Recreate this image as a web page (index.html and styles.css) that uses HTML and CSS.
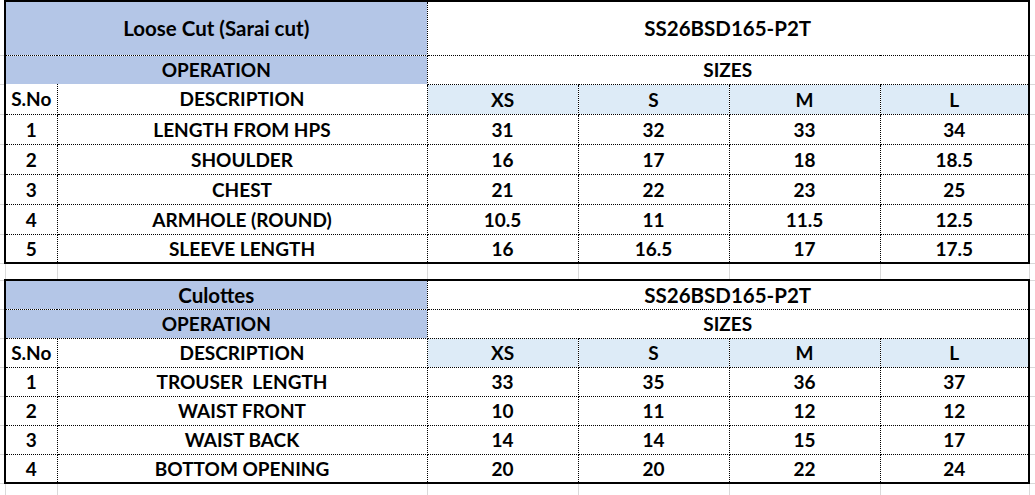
FILE: index.html
```html
<!DOCTYPE html>
<html>
<head>
<meta charset="utf-8">
<link rel="stylesheet" href="styles.css">
</head>
<body>
<table class="sheet">
  <colgroup>
    <col class="col-gut">
    <col class="col-a">
    <col class="col-b">
    <col class="col-s">
    <col class="col-s">
    <col class="col-s">
    <col class="col-f">
    <col class="col-gut-r">
  </colgroup>
  <tbody>
    <!-- Table 1 -->
    <tr class="h-title">
      <td class="gut"></td>
      <td colspan="2" class="c blue t-top t-left title">Loose Cut (Sarai cut)</td>
      <td colspan="4" class="c t-top t-right title">SS26BSD165-P2T</td>
      <td class="gut-r"></td>
    </tr>
    <tr class="h-29">
      <td class="gut"></td>
      <td colspan="2" class="c blue t-left no-bot">OPERATION</td>
      <td colspan="4" class="c t-right">SIZES</td>
      <td class="gut-r"></td>
    </tr>
    <tr class="h-30">
      <td class="gut"></td>
      <td class="c t-left no-top">S.No</td>
      <td class="c no-top">DESCRIPTION</td>
      <td class="c pale">XS</td>
      <td class="c pale">S</td>
      <td class="c pale">M</td>
      <td class="c pale t-right">L</td>
      <td class="gut-r"></td>
    </tr>
    <tr class="h-30">
      <td class="gut"></td>
      <td class="c t-left">1</td>
      <td class="c">LENGTH FROM HPS</td>
      <td class="c">31</td><td class="c">32</td><td class="c">33</td><td class="c t-right">34</td>
      <td class="gut-r"></td>
    </tr>
    <tr class="h-30">
      <td class="gut"></td>
      <td class="c t-left">2</td>
      <td class="c">SHOULDER</td>
      <td class="c">16</td><td class="c">17</td><td class="c">18</td><td class="c t-right">18.5</td>
      <td class="gut-r"></td>
    </tr>
    <tr class="h-30">
      <td class="gut"></td>
      <td class="c t-left">3</td>
      <td class="c">CHEST</td>
      <td class="c">21</td><td class="c">22</td><td class="c">23</td><td class="c t-right">25</td>
      <td class="gut-r"></td>
    </tr>
    <tr class="h-30">
      <td class="gut"></td>
      <td class="c t-left">4</td>
      <td class="c">ARMHOLE (ROUND)</td>
      <td class="c">10.5</td><td class="c">11</td><td class="c">11.5</td><td class="c t-right">12.5</td>
      <td class="gut-r"></td>
    </tr>
    <tr class="h-29">
      <td class="gut"></td>
      <td class="c t-left t-bot">5</td>
      <td class="c t-bot">SLEEVE LENGTH</td>
      <td class="c t-bot">16</td><td class="c t-bot">16.5</td><td class="c t-bot">17</td><td class="c t-bot t-right">17.5</td>
      <td class="gut-r"></td>
    </tr>
    <!-- spacer -->
    <tr class="h-spacer">
      <td class="gut"></td>
      <td class="sp"></td><td class="sp"></td><td class="sp"></td><td class="sp"></td><td class="sp"></td><td class="sp"></td>
      <td class="gut-r"></td>
    </tr>
    <!-- Table 2 -->
    <tr class="h-29">
      <td class="gut"></td>
      <td colspan="2" class="c blue t-top t-left title">Culottes</td>
      <td colspan="4" class="c t-top t-right title">SS26BSD165-P2T</td>
      <td class="gut-r"></td>
    </tr>
    <tr class="h-29">
      <td class="gut"></td>
      <td colspan="2" class="c blue t-left">OPERATION</td>
      <td colspan="4" class="c t-right">SIZES</td>
      <td class="gut-r"></td>
    </tr>
    <tr class="h-29">
      <td class="gut"></td>
      <td class="c t-left">S.No</td>
      <td class="c">DESCRIPTION</td>
      <td class="c pale">XS</td>
      <td class="c pale">S</td>
      <td class="c pale">M</td>
      <td class="c pale t-right">L</td>
      <td class="gut-r"></td>
    </tr>
    <tr class="h-29">
      <td class="gut"></td>
      <td class="c t-left">1</td>
      <td class="c">TROUSER&nbsp; LENGTH</td>
      <td class="c">33</td><td class="c">35</td><td class="c">36</td><td class="c t-right">37</td>
      <td class="gut-r"></td>
    </tr>
    <tr class="h-29">
      <td class="gut"></td>
      <td class="c t-left">2</td>
      <td class="c">WAIST FRONT</td>
      <td class="c">10</td><td class="c">11</td><td class="c">12</td><td class="c t-right">12</td>
      <td class="gut-r"></td>
    </tr>
    <tr class="h-29">
      <td class="gut"></td>
      <td class="c t-left">3</td>
      <td class="c">WAIST BACK</td>
      <td class="c">14</td><td class="c">14</td><td class="c">15</td><td class="c t-right">17</td>
      <td class="gut-r"></td>
    </tr>
    <tr class="h-29">
      <td class="gut"></td>
      <td class="c t-left t-bot">4</td>
      <td class="c t-bot">BOTTOM OPENING</td>
      <td class="c t-bot">20</td><td class="c t-bot">20</td><td class="c t-bot">22</td><td class="c t-bot t-right">24</td>
      <td class="gut-r"></td>
    </tr>
    <!-- trailing empty sheet row -->
    <tr class="h-tail">
      <td class="gut"></td>
      <td class="sp"></td><td class="sp"></td><td class="sp"></td><td class="sp"></td><td class="sp"></td><td class="sp"></td>
      <td class="gut-r"></td>
    </tr>
  </tbody>
</table>
</body>
</html>
```

FILE: styles.css
```css
html, body {
  margin: 0;
  padding: 0;
  background: #ffffff;
}

body {
  font-family: Lato, "Open Sans", "Liberation Sans", sans-serif;
  font-weight: 700;
  font-size: 19px;
  color: #000000;
  overflow: hidden;
}

.sheet {
  border-collapse: collapse;
  table-layout: fixed;
  width: 1035px;
}

.col-gut { width: 5px; }
.col-a { width: 52px; }
.col-b { width: 370px; }
.col-s { width: 151px; }
.col-f { width: 149px; }
.col-gut-r { width: 6px; }

.sheet td {
  padding: 1px 0 0 0;
  line-height: 20px;
  text-align: center;
  vertical-align: middle;
  white-space: nowrap;
  overflow: hidden;
}

.sheet td.title {
  font-size: 20.5px;
  padding-top: 0;
}

.h-title { height: 54px; }
.h-30 { height: 30px; }
.h-29 { height: 29px; }
.h-spacer { height: 17px; }
.h-tail { height: 13px; }

.c {
  border: 1px dotted #000000;
}

.blue { background: #b4c6e7; }
.pale { background: #ddebf7; }

.t-top { border-top: 2px solid #000000; }
.t-bot { border-bottom: 2px solid #000000; }
.t-left { border-left: 2px solid #000000; }
.t-right { border-right: 2px solid #000000; }

.no-bot { border-bottom: none; }
.no-top { border-top: none; }

.gut {
  border-bottom: 1px solid #d9d9d9;
}

.gut-r {
  border-left: 1px solid #d9d9d9;
  border-bottom: 1px solid #d9d9d9;
}

.sp {
  border-left: 1px solid #d9d9d9;
  border-right: 1px solid #d9d9d9;
}
```
